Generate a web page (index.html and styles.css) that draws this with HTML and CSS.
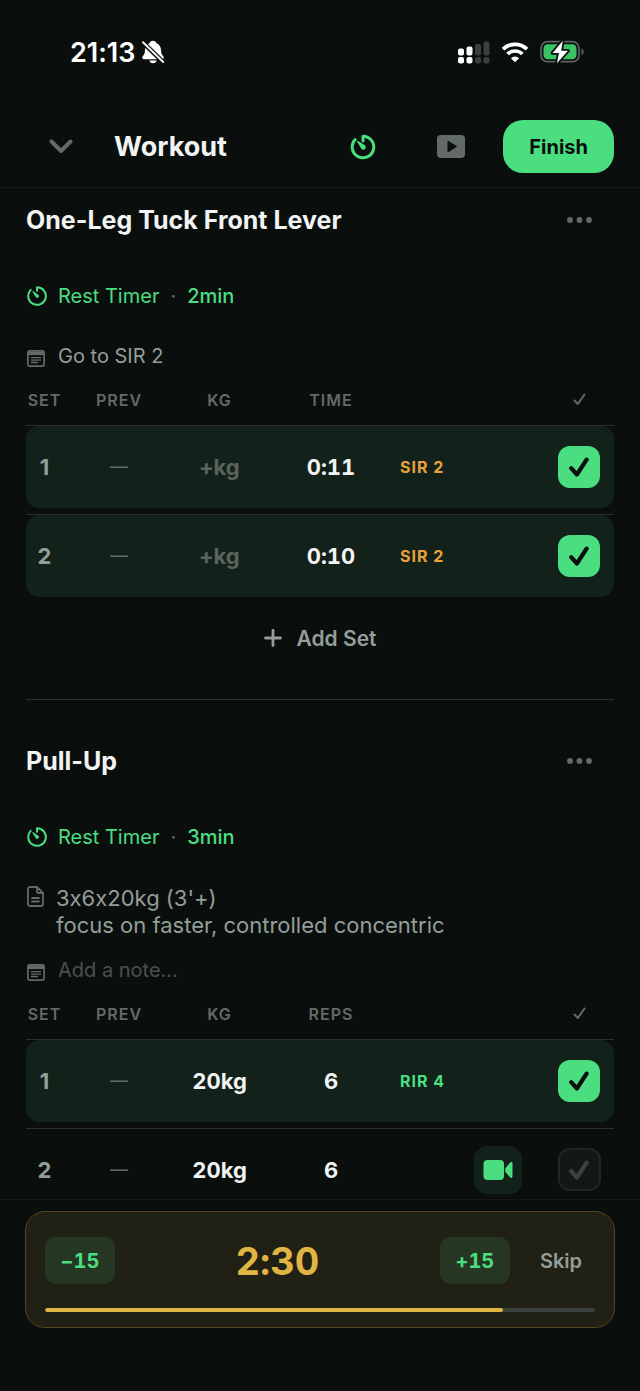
FILE: index.html
```html
<!DOCTYPE html>
<html lang="en">
<head>
	<meta charset="utf-8">
	<meta name="viewport" content="width=device-width, initial-scale=1">
	<title>Workout</title>
	<link rel="stylesheet" href="styles.css">
</head>
<body>
	<svg class="sprite" aria-hidden="true">
		<symbol id="timer" viewBox="0 0 26 26">
			<path d="M13 7V2.2A10.8 10.8 0 1 1 5.2 5.500" fill="none" stroke="currentColor" stroke-width="3" stroke-linecap="round" stroke-linejoin="round"/>
			<path d="M7.600 7.400 14.600 11.800A1.900 1.900 0 1 1 11.900 14.500Z" fill="currentColor" stroke="currentColor" stroke-width="1.200" stroke-linejoin="round"/>
		</symbol>
		<symbol id="timer-thin" viewBox="0 0 20 20">
			<path d="M10 4.800V1.200A8.800 8.800 0 1 1 3.700 3.900" fill="none" stroke="currentColor" stroke-width="2" stroke-linecap="round" stroke-linejoin="round"/>
			<path d="M5.800 5.600 11.200 9.200A1.300 1.300 0 1 1 9.200 11Z" fill="currentColor" stroke="currentColor" stroke-width="1" stroke-linejoin="round"/>
		</symbol>
		<symbol id="note" viewBox="0 0 18 17">
			<rect x=".9" y=".9" width="16.200" height="15.200" rx="2" fill="none" stroke="currentColor" stroke-width="1.700"/>
			<path d="M1 1.500h16v3.600H1z" fill="currentColor"/>
			<path d="M4.400 7.700h9.200M4.400 10.100h9.200M4.400 12.500h6" stroke="currentColor" stroke-width="1.300" stroke-linecap="round"/>
		</symbol>
		<symbol id="doc" viewBox="0 0 17 21">
			<path d="M3 1h7l6 6v11a2 2 0 0 1-2 2H3a2 2 0 0 1-2-2V3a2 2 0 0 1 2-2ZM10 1v4.500A1.500 1.500 0 0 0 11.500 7H16M5 12h7M5 15.500h7" fill="none" stroke="currentColor" stroke-width="1.800" stroke-linecap="round" stroke-linejoin="round"/>
		</symbol>
		<symbol id="tick" viewBox="0 0 20 20">
			<path d="M2.200 11.200 7.900 17.500 17.600 2.600" fill="none" stroke="currentColor" stroke-width="4.200" stroke-linecap="round" stroke-linejoin="round"/>
		</symbol>
		<symbol id="tick-small" viewBox="0 0 13 13">
			<path d="M1.500 7.500 4.800 11 11.500 1.500" fill="none" stroke="currentColor" stroke-width="2" stroke-linecap="round" stroke-linejoin="round"/>
		</symbol>
		<symbol id="dots" viewBox="0 0 26 6">
			<circle cx="3" cy="3" r="2.900" fill="currentColor"/><circle cx="12.500" cy="3" r="2.900" fill="currentColor"/><circle cx="22" cy="3" r="2.900" fill="currentColor"/>
		</symbol>
	</svg>

	<div class="status">
		<span class="clock">21:13</span>
		<svg class="bell" width="22" height="24" viewBox="0 0 22 24">
			<path d="M11 .8c1.800 0 3.100.9 3.500 2.400 2.900 1.200 4.400 3.600 4.500 6.800.1 3.300.7 4.500 2.300 6.300.8.900.4 2.900-1.100 2.900H1.800c-1.500 0-1.900-2-1.100-2.900C2.300 14.500 2.900 13.300 3 10c.1-3.200 1.600-5.600 4.500-6.800C7.900 1.700 9.200.8 11 .8ZM7.300 20.600h7.400c-.4 1.600-1.800 2.700-3.700 2.700s-3.300-1.100-3.700-2.700Z" fill="#fff"/>
			<path d="M0 1.500 22 23" stroke="#0a0f0e" stroke-width="4.600"/>
			<path d="M1 2.200 21.200 22" stroke="#fff" stroke-width="1.900" stroke-linecap="round"/>
		</svg>
		<span class="spacer"></span>
		<svg width="32" height="23" viewBox="0 0 32 23" fill="#fff">
			<rect x="0" y="7.500" width="6" height="7" rx="2"/><rect x="0" y="16" width="6" height="6.500" rx="2"/>
			<rect x="8.500" y="5.500" width="6" height="9" rx="2"/><rect x="8.500" y="16" width="6" height="6.500" rx="2"/>
			<g fill="#3b3f3e"><rect x="17" y="3" width="6" height="11.500" rx="2"/><rect x="17" y="16" width="6" height="6.500" rx="2"/>
			<rect x="25.500" y=".5" width="6" height="14" rx="2"/><rect x="25.500" y="16" width="6" height="6.500" rx="2"/></g>
		</svg>
		<svg width="28" height="21" viewBox="0 0 28 21" fill="none" stroke="#fff">
			<path d="M2 7.200a17.200 17.200 0 0 1 24 0" stroke-width="3.800"/>
			<path d="M6.600 12a10.600 10.600 0 0 1 14.800 0" stroke-width="3.600"/>
			<path d="M14 20.300 9.900 16.200a5.900 5.900 0 0 1 8.200 0Z" fill="#fff" stroke="none"/>
		</svg>
		<svg width="44" height="24" viewBox="0 0 44 24">
			<rect x="1" y="1.700" width="38" height="20" rx="6.500" fill="none" stroke="#5e6361" stroke-width="1.700"/>
			<path d="M41.500 8.500c2.800.8 2.800 5.700 0 6.500Z" fill="#5e6361"/>
			<rect x="3.500" y="4.200" width="33" height="15" rx="4.200" fill="#3bc363"/>
			<path d="M22.800.8 12.600 13h6.300l-2 10.200L28 10.800h-6.800Z" fill="#fff" stroke="#0a0f0e" stroke-width="3.600" stroke-linejoin="round" paint-order="stroke"/>
		</svg>
	</div>

	<header class="topbar">
		<button class="icon back" aria-label="Minimise">
			<svg width="24" height="15" viewBox="0 0 24 15"><path d="M2.500 2.500 12 12 21.500 2.500" fill="none" stroke="currentColor" stroke-width="4" stroke-linecap="round" stroke-linejoin="round"/></svg>
		</button>
		<h1>Workout</h1>
		<span class="spacer"></span>
		<button class="icon green" aria-label="Timer"><svg width="26" height="26"><use href="#timer"/></svg></button>
		<button class="icon" aria-label="Video">
			<svg width="28" height="23" viewBox="0 0 28 23"><rect width="28" height="23" rx="4" fill="currentColor"/><path d="M10.500 6.500v10a.6.600 0 0 0 1 .5l8-5a.6.600 0 0 0 0-1l-8-5a.6.600 0 0 0-1 .5Z" fill="#0a0f0e"/></svg>
		</button>
		<button class="finish">Finish</button>
	</header>

	<main>
		<section class="exercise">
			<div class="title">
				<h2>One-Leg Tuck Front Lever</h2>
				<button class="more" aria-label="More"><svg width="26" height="6"><use href="#dots"/></svg></button>
			</div>
			<button class="rest"><svg width="20" height="20"><use href="#timer-thin"/></svg>Rest Timer <i>·</i> <b>2min</b></button>
			<label class="note">
				<svg width="18" height="17"><use href="#note"/></svg>
				<input type="text" value="Go to SIR 2" placeholder="Add a note..." aria-label="Note">
			</label>
			<table class="sets">
				<thead>
					<tr><th>SET</th><th>PREV</th><th>KG</th><th>TIME</th><th></th><th><svg width="13" height="13" aria-label="Done"><use href="#tick-small"/></svg></th></tr>
				</thead>
				<tbody>
					<tr class="done">
						<td class="num">1</td>
						<td class="prev">—</td>
						<td><input class="val" type="text" placeholder="+kg" aria-label="Weight"></td>
						<td><input class="val" type="text" value="0:11" aria-label="Time"></td>
						<td class="extra"><span class="effort sir">SIR 2</span></td>
						<td><label class="check"><input type="checkbox" checked aria-label="Set 1 done"><svg width="20" height="20"><use href="#tick"/></svg></label></td>
					</tr>
					<tr class="done">
						<td class="num">2</td>
						<td class="prev">—</td>
						<td><input class="val" type="text" placeholder="+kg" aria-label="Weight"></td>
						<td><input class="val" type="text" value="0:10" aria-label="Time"></td>
						<td class="extra"><span class="effort sir">SIR 2</span></td>
						<td><label class="check"><input type="checkbox" checked aria-label="Set 2 done"><svg width="20" height="20"><use href="#tick"/></svg></label></td>
					</tr>
				</tbody>
			</table>
			<button class="add">
				<svg width="18" height="18" viewBox="0 0 18 18"><path d="M9 1.500v15M1.500 9h15" stroke="currentColor" stroke-width="2.800" stroke-linecap="round"/></svg>
				Add Set
			</button>
		</section>

		<section class="exercise">
			<div class="title">
				<h2>Pull-Up</h2>
				<button class="more" aria-label="More"><svg width="26" height="6"><use href="#dots"/></svg></button>
			</div>
			<button class="rest"><svg width="20" height="20"><use href="#timer-thin"/></svg>Rest Timer <i>·</i> <b>3min</b></button>
			<div class="plan">
				<svg width="17" height="21"><use href="#doc"/></svg>
				<p>3x6x20kg (3'+)<br>focus on faster, controlled concentric</p>
			</div>
			<label class="note">
				<svg width="18" height="17"><use href="#note"/></svg>
				<input type="text" placeholder="Add a note..." aria-label="Note">
			</label>
			<table class="sets">
				<thead>
					<tr><th>SET</th><th>PREV</th><th>KG</th><th>REPS</th><th></th><th><svg width="13" height="13" aria-label="Done"><use href="#tick-small"/></svg></th></tr>
				</thead>
				<tbody>
					<tr class="done">
						<td class="num">1</td>
						<td class="prev">—</td>
						<td><input class="val" type="text" value="20kg" aria-label="Weight"></td>
						<td><input class="val" type="text" value="6" aria-label="Reps"></td>
						<td class="extra"><span class="effort rir">RIR 4</span></td>
						<td><label class="check"><input type="checkbox" checked aria-label="Set 1 done"><svg width="20" height="20"><use href="#tick"/></svg></label></td>
					</tr>
					<tr>
						<td class="num">2</td>
						<td class="prev">—</td>
						<td><input class="val" type="text" value="20kg" aria-label="Weight"></td>
						<td><input class="val" type="text" value="6" aria-label="Reps"></td>
						<td class="extra">
							<button class="record" aria-label="Record set">
								<svg width="30" height="20" viewBox="0 0 30 20" fill="currentColor"><rect x=".5" width="20.500" height="20" rx="4"/><path d="M22.300 8.200 27.300 2.500c.9-.9 2.200-.3 2.200.9v13.200c0 1.200-1.300 1.800-2.200.9l-5-5.700Z"/></svg>
							</button>
						</td>
						<td><label class="check"><input type="checkbox" aria-label="Set 2 done"><svg width="20" height="20"><use href="#tick"/></svg></label></td>
					</tr>
				</tbody>
			</table>
		</section>
	</main>

	<footer class="dock">
		<div class="timer">
			<div class="controls">
				<button class="step">−15</button>
				<span class="count">2:30</span>
				<button class="step">+15</button>
				<button class="skip">Skip</button>
			</div>
			<div class="track"><div class="fill" style="width: 83.3%"></div></div>
		</div>
	</footer>
</body>
</html>
```

FILE: styles.css
```css
* {
	box-sizing: border-box;
}
body {
	margin: 0;
	height: 100vh;
	display: flex;
	flex-direction: column;
	background: #0a0f0e;
	color: #f2f4f3;
	font-family: Inter, "Liberation Sans", sans-serif;
	font-size: 20px;
	font-variant-ligatures: no-contextual;
}
button, input {
	font: inherit;
	font-variant-ligatures: inherit;
	color: inherit;
	background: none;
	border: 0;
	padding: 0;
	margin: 0;
}
button {
	cursor: pointer;
}
h1, h2, p {
	margin: 0;
}
svg {
	display: block;
	flex: none;
}
.sprite {
	position: absolute;
	width: 0;
	height: 0;
}
.spacer {
	flex: 1;
}

/* status bar */
.status {
	flex: none;
	height: 106px;
	padding: 0 56px 2px 70px;
	display: flex;
	align-items: center;
	gap: 11px;
}
.clock {
	font-size: 27px;
	font-weight: 600;
	color: #fff;
}
.bell {
	margin-left: -4px;
}

/* top bar */
.topbar {
	flex: none;
	height: 82px;
	padding: 0 26px;
	display: flex;
	align-items: center;
	border-bottom: 1px solid #151a19;
}
.topbar h1 {
	margin-left: 18px;
	font-size: 27px;
	font-weight: 700;
}
.icon {
	width: 70px;
	height: 52px;
	margin-right: 17px;
	display: grid;
	place-items: center;
	color: #626b66;
}
.icon.back {
	margin: 0;
}
.icon.green {
	margin-right: 18px;
	color: #4ade80;
}
.finish {
	height: 53px;
	padding: 0 26px;
	border-radius: 20px;
	background: #4ade80;
	color: #0a0f0e;
	font-weight: 700;
}

/* exercises */
main {
	flex: 1;
	min-height: 0;
	overflow-y: auto;
	scrollbar-width: none;
	padding: 0 26px;
}
.exercise + .exercise {
	margin-top: 26px;
	padding-top: 29px;
	border-top: 1px solid #2a302e;
}
.title {
	height: 64px;
	display: flex;
	align-items: center;
	justify-content: space-between;
}
.title h2 {
	font-size: 25px;
	font-weight: 700;
}
.more {
	height: 44px;
	padding: 0 21px;
	color: #626b66;
}
.rest {
	height: 80px;
	margin-top: 4px;
	padding: 0 1px;
	display: flex;
	align-items: center;
	color: #4ade80;
}
.rest svg {
	margin-right: 11px;
}
.rest i {
	margin: 0 11px;
	font-style: normal;
	color: #626b66;
}
.rest b {
	font-weight: 500;
}
.note {
	height: 40px;
	padding: 0 1px;
	display: flex;
	align-items: center;
	color: #626b66;
}
.note svg {
	margin: 4px 13px 0 0;
}
.note input {
	flex: 1;
	color: #949e99;
}
::placeholder {
	color: #4b524e;
	opacity: 1;
}
.plan {
	padding: 8px 1px 11px;
	display: flex;
	gap: 12px;
	color: #949e99;
	font-size: 22px;
	line-height: 27px;
}
.plan svg {
	margin-top: 1px;
	color: #626b66;
}

/* set table */
.sets, .sets thead, .sets tbody {
	display: block;
}
.sets tr {
	display: grid;
	grid-template-columns: 37px 112px 89px 134px 1fr 70px;
}
.sets th, .sets td {
	padding: 0;
	display: flex;
	align-items: center;
	justify-content: center;
}
.sets th {
	height: 49px;
	padding-bottom: 2px;
	font-size: 16px;
	font-weight: 600;
	letter-spacing: 1px;
	color: #626b66;
}
.sets tbody tr {
	border-top: 1px solid #2a302e;
	padding-bottom: 6px;
}
.sets td {
	height: 82px;
	padding-bottom: 1px;
	font-size: 22px;
	font-weight: 700;
}
.done td {
	background: #12211a;
}
.done td:first-child {
	border-radius: 13px 0 0 13px;
}
.done td:last-child {
	border-radius: 0 13px 13px 0;
}
.sets .num {
	color: #949e99;
}
.sets .prev {
	color: #626b66;
	font-size: 18px;
	font-weight: 400;
}
.val {
	width: 100%;
	text-align: center;
	font-variant-numeric: tabular-nums;
}
.val::placeholder {
	color: #5a645e;
}
.sets .extra {
	justify-content: flex-start;
	padding: 0 22px 0 2px;
}
.effort {
	font-size: 16px;
	font-weight: 700;
	letter-spacing: 1px;
}
.sir {
	color: #e9a23b;
}
.rir {
	color: #4ade80;
}
.record {
	width: 48px;
	height: 48px;
	margin-left: auto;
	display: grid;
	place-items: center;
	border-radius: 13px;
	background: #12211a;
	color: #4ade80;
}
.check {
	display: grid;
	place-items: center;
}
.check input, .check svg {
	grid-area: 1 / 1;
}
.check input {
	appearance: none;
	width: 43px;
	height: 43px;
	border: 2px solid #1f2623;
	border-radius: 12px;
	background: #131716;
}
.check svg {
	color: #3b423f;
	pointer-events: none;
}
.check input:checked {
	width: 42px;
	height: 42px;
	border: 0;
	background: #4ade80;
}
.check input:checked + svg {
	color: #0a0f0e;
}
.add {
	width: 100%;
	height: 70px;
	display: flex;
	align-items: center;
	justify-content: center;
	gap: 15px;
	color: #949e99;
	font-size: 21px;
	font-weight: 600;
}

/* rest countdown */
.dock {
	flex: none;
	padding: 11px 25px 63px;
	border-top: 1px solid #151a19;
}
.timer {
	padding: 25px 19px 15px;
	border: 1px solid #54461f;
	border-radius: 20px;
	background: #212015;
}
.controls {
	display: flex;
	align-items: center;
}
.step {
	width: 70px;
	height: 47px;
	border-radius: 11px;
	background: #253622;
	color: #4ade80;
	font-weight: 700;
	font-variant-numeric: tabular-nums;
}
.count {
	flex: 1;
	text-align: center;
	color: #e0b544;
	font-size: 38px;
	line-height: 46px;
	font-weight: 700;
	font-variant-numeric: tabular-nums;
}
.skip {
	height: 47px;
	margin-left: 17px;
	padding: 0 13px;
	color: #949e99;
	font-weight: 600;
}
.track {
	height: 4px;
	margin-top: 24px;
	border-radius: 2px;
	background: #3a403c;
	overflow: hidden;
}
.fill {
	height: 100%;
	border-radius: 2px;
	background: #e0b544;
}
```
